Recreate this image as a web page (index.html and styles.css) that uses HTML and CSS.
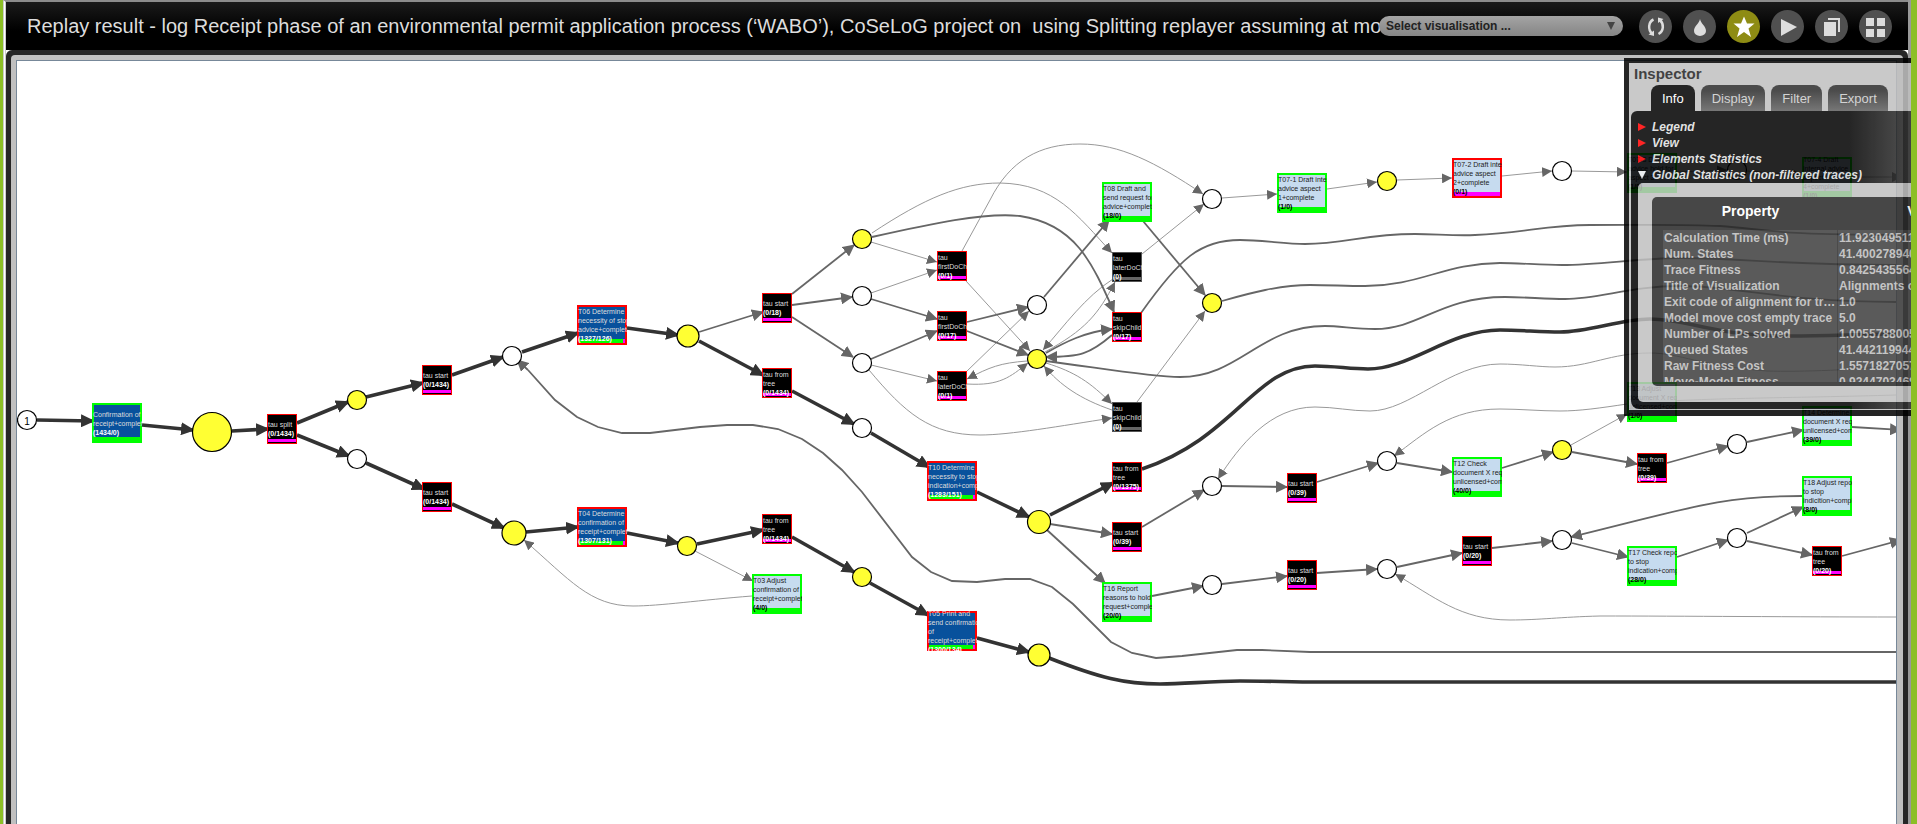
FILE: index.html
```html
<!DOCTYPE html>
<html lang="en">
<head>
<meta charset="utf-8">
<title>Replay result</title>
<link rel="stylesheet" href="styles.css">
</head>
<body>
<div class="desktop">
<main class="window">
<header class="bar">
<h1 class="title">Replay result - log Receipt phase of an environmental permit application process (‘WABO’), CoSeLoG project on  using Splitting replayer assuming at most</h1>
<div class="picker">
<select class="picker-select" aria-label="Select visualisation"><option>Select visualisation ...</option></select>
<svg class="picker-arrow" width="8" height="8" viewBox="0 0 8 8" aria-hidden="true"><path d="M0 0H8L4 8Z"/></svg>
</div>
<nav class="tools">
<button class="tool" aria-label="Refresh"><svg viewBox="0 0 33 33"><path d="M14.500 9.500C9 12 9 20 13 23.500M19.500 24C25 21 25 14 21 10" fill="none" stroke="#ddd" stroke-width="2.500"/><path d="M9.500 24.500L15 20.500V26ZM24.500 9L19 7.500V13Z"/></svg></button>
<button class="tool" aria-label="Drop"><svg viewBox="0 0 33 33"><path d="M17 9C18 14 23 16 23 21A6 5 0 0 1 11 21C11 16 16 14 17 9Z"/></svg></button>
<button class="tool tool-active" aria-label="Favourite"><svg viewBox="0 0 33 33"><path d="M17 6.500L20 13.500H27.500L21.500 18.500L24 27L17 22L10 27L12.500 18.500L6.500 13.500H14Z"/></svg></button>
<button class="tool" aria-label="Run"><svg viewBox="0 0 33 33"><path d="M10 9L26 17L10 26Z"/></svg></button>
<button class="tool" aria-label="Copy"><svg viewBox="0 0 33 33"><path d="M13 8H25V22H23V10H13Z"/><path d="M9 12H21V26H9Z"/></svg></button>
<button class="tool" aria-label="Grid"><svg viewBox="0 0 33 33"><path d="M7 8H15V16H7ZM18 8H26V16H18ZM7 19H15V27H7ZM18 19H26V27H18Z"/></svg></button>
</nav>
</header>
<section class="frame"><div class="frame-inner"><div class="canvas">
<svg class="graph" role="img" aria-label="Petri net with replay result">
<defs>
<marker id="a3" markerUnits="userSpaceOnUse" markerWidth="14" markerHeight="13" refX="12" refY="6.500" orient="auto"><path d="M0 0L14 6.500L0 13Z" fill="#333"/></marker>
<marker id="a2" markerUnits="userSpaceOnUse" markerWidth="12" markerHeight="12" refX="11" refY="6" orient="auto"><path d="M0 0L12 6L0 12Z" fill="#666"/></marker>
<marker id="a1" markerUnits="userSpaceOnUse" markerWidth="10" markerHeight="10" refX="10" refY="5" orient="auto"><path d="M0 0L10 5L0 10Z" fill="#666"/></marker>
<g id="hit"><rect width="50" height="40" fill="#0f0"/><rect x="2" y="2" width="46" height="32" fill="#08519c"/></g>
<g id="hit-light"><rect width="50" height="40" fill="#0f0"/><rect x="2" y="2" width="46" height="32" fill="#c6dbef"/></g>
<g id="mix"><rect width="50" height="40" fill="red"/><rect x="2" y="2" width="46" height="36" fill="#08519c"/><rect x="2" y="34" width="46" height="4" fill="#f0f"/><rect x="2" y="34" width="44" height="4" fill="#0f0"/></g>
<g id="miss"><rect width="50" height="40" fill="red"/><rect x="2" y="2" width="46" height="32" fill="#c6dbef"/><rect x="2" y="34" width="46" height="4" fill="#f0f"/></g>
<g id="tau"><rect width="30" height="30" fill="red"/><rect x="1" y="1" width="28" height="28"/><rect x="1" y="25" width="28" height="3" fill="#f0f"/></g>
<g id="tau-idle"><rect width="30" height="30" fill="#555"/><rect x="1" y="1" width="28" height="28"/><rect x="1" y="25" width="28" height="3" fill="#666"/></g>
</defs>
<g transform="translate(-17 -61)">
<g class="thin">
<path d="M695 551L753 581"/><path d="M752 596C700 600 660 606 633 606C590 606 570 580 524 540"/>
<path d="M871 242L937 262"/><path d="M871 293L937 270"/>
<path d="M872 233C925 198 960 183 1000 183C1055 184 1077 215 1112 253"/>
<path d="M962 251L990 200C1010 160 1040 144 1080 144C1120 144 1155 162 1203 194"/>
<path d="M966 281L1030 351"/><path d="M871 365L937 381"/><path d="M966 372L1029 311"/>
<path d="M1027 361C1000 363 990 367 967 379"/><path d="M967 384C1000 386 1010 377 1028 363"/>
<path d="M869 370C905 413 930 435 980 435C1010 435 1060 426 1112 418"/>
<path d="M1045 352C1085 330 1098 315 1115 282"/><path d="M1113 279C1085 297 1065 325 1043 350"/>
<path d="M1046 363C1075 372 1090 382 1112 404"/><path d="M1112 410C1080 399 1060 385 1044 366"/>
<path d="M1142 254L1204 204"/><path d="M1137 402L1205 311"/>
<path d="M1222 198L1277 194"/><path d="M1327 189L1377 182"/><path d="M1397 180L1452 178"/><path d="M1502 176L1552 171"/><path d="M1572 171L1627 172"/><path d="M1677 172L1727 170"/><path d="M1747 171L1802 175"/><path d="M1852 177L1902 177"/>
<path d="M1896 365C1860 370 1800 372 1767 371C1700 366 1680 353 1650 353C1610 353 1590 367 1555 367C1540 367 1520 364 1500 364C1450 364 1410 411 1370 411C1350 411 1335 407 1315 407C1270 407 1240 445 1218 479"/>
<path d="M1896 395C1800 398 1680 398 1627 404C1600 408 1580 411 1560 411C1540 411 1520 409 1500 409C1450 409 1425 433 1394 456"/>
<path d="M1571 445L1627 414"/>
<path d="M1896 617C1800 617 1680 616 1600 616C1560 617 1540 620 1510 620C1460 620 1435 597 1395 574"/>
</g>
<g class="mid">
<path d="M699 332L763 312"/><path d="M792 294L854 245"/><path d="M792 305L852 297"/><path d="M792 317L853 357"/>
<path d="M871 299L937 319"/><path d="M871 359L937 331"/><path d="M967 322L1028 307"/><path d="M967 331L1028 355"/>
<path d="M1044 297L1109 220"/><path d="M1143 221L1205 295"/>
<path d="M872 237C930 224 985 212 1020 216C1075 224 1092 262 1114 312"/>
<path d="M1046 353C1065 342 1085 332 1112 329"/><path d="M1112 335C1090 354 1080 357 1046 357"/>
<path d="M528 370L517 360"/>
<path d="M1050 524L1112 534"/><path d="M1047 530L1105 583"/><path d="M1142 527L1204 490"/><path d="M1222 486L1287 487"/><path d="M1317 482L1378 463"/><path d="M1397 463L1452 472"/><path d="M1502 468L1553 452"/><path d="M1572 452L1637 464"/><path d="M1667 463L1728 446"/><path d="M1747 442L1803 430"/><path d="M1852 427L1901 430"/>
<path d="M1152 596L1203 586"/><path d="M1222 584L1287 576"/><path d="M1317 573L1377 569"/><path d="M1397 567L1462 553"/><path d="M1492 548L1552 541"/><path d="M1572 543L1628 557"/><path d="M1677 557L1728 540"/><path d="M1747 533L1803 507"/><path d="M1747 541L1812 555"/><path d="M1842 556L1901 540"/>
<path d="M1802 496C1720 496 1690 508 1571 537"/>
</g>
<g class="mid plain">
<path d="M528 370L555 400L577 417L598 427L622 433L650 433L700 427L727 425L753 425L778 429L802 439L823 453L842 470L862 492L912 557L931 572L952 581L977 582L1005 579L1030 579L1052 587L1073 604L1111 642L1132 653L1156 658L1182 656L1237 650L1262 650L1310 652H1896"/>
<path d="M1141 313C1180 258 1200 240 1240 240C1262 240 1285 244 1305 244C1345 244 1365 234 1415 234C1435 234 1455 236 1475 235C1525 233 1545 225 1590 225C1640 225 1680 224 1720 226C1770 230 1780 235 1896 235"/>
<path d="M1222 301C1250 293 1280 285 1310 285C1330 285 1345 286 1365 286C1420 286 1445 263 1500 263C1520 263 1540 265 1562 265C1600 265 1640 258 1680 258C1740 258 1780 265 1896 265"/>
<path d="M1046 361C1100 368 1150 377 1180 377C1240 377 1260 326 1325 326C1340 326 1355 329 1375 329C1420 329 1440 297 1505 297C1525 297 1545 299 1565 299C1600 299 1630 286 1680 286C1740 286 1780 302 1896 302"/>
</g>
<g class="thick">
<path d="M37 420L93 421"/><path d="M142 425L193 430"/><path d="M232 431L268 429"/><path d="M297 423L348 402"/><path d="M297 435L349 456"/><path d="M366 397L423 383"/><path d="M366 463L424 489"/><path d="M452 375L503 357"/><path d="M452 504L504 528"/><path d="M522 352L578 333"/><path d="M627 328L678 335"/><path d="M699 341L763 375"/><path d="M792 391L854 424"/><path d="M871 433L929 467"/><path d="M526 532L578 527"/><path d="M627 533L678 543"/><path d="M697 544L763 530"/><path d="M792 537L854 572"/><path d="M870 583L928 615"/><path d="M977 638L1029 652"/><path d="M977 492L1029 517"/><path d="M1050 515L1113 483"/>
</g>
<g class="thick plain">
<path d="M1142 469C1235 438 1255 366 1315 366C1335 366 1350 369 1368 369C1410 369 1450 330 1500 330C1520 330 1540 332 1560 332C1590 332 1620 319 1650 319C1690 319 1710 336 1790 336C1830 336 1860 334 1896 334"/>
<path d="M1049 658C1100 678 1125 684 1160 684C1185 684 1210 681 1240 681C1270 681 1290 682 1320 682H1896"/>
</g>
<g class="place">
<circle cx="27" cy="420" r="9.500"/><circle cx="357" cy="459" r="9.500"/><circle cx="512" cy="356" r="9.500"/><circle cx="862" cy="296" r="9.500"/><circle cx="862" cy="363" r="9.500"/><circle cx="862" cy="428" r="9.500"/><circle cx="1037" cy="305" r="9.500"/><circle cx="1212" cy="199" r="9.500"/><circle cx="1212" cy="486" r="9.500"/><circle cx="1212" cy="585" r="9.500"/><circle cx="1387" cy="461" r="9.500"/><circle cx="1387" cy="569" r="9.500"/><circle cx="1562" cy="171" r="9.500"/><circle cx="1562" cy="540" r="9.500"/><circle cx="1737" cy="170" r="9.500"/><circle cx="1737" cy="444" r="9.500"/><circle cx="1737" cy="538" r="9.500"/>
</g>
<g class="place marked">
<circle cx="212" cy="432" r="19.500"/><circle cx="357" cy="400" r="9.500"/><circle cx="688" cy="336" r="11"/><circle cx="514" cy="533" r="12"/><circle cx="687" cy="546" r="9.500"/><circle cx="862" cy="239" r="9.500"/><circle cx="862" cy="577" r="9.500"/><circle cx="1037" cy="359" r="9.500"/><circle cx="1039" cy="522" r="11.500"/><circle cx="1039" cy="655" r="11"/><circle cx="1212" cy="303" r="9.500"/><circle cx="1387" cy="181" r="9.500"/><circle cx="1562" cy="450" r="9.500"/>
</g>
<text class="token" x="27" y="425">1</text>

<g class="dark">
<svg x="92" y="403" width="50" height="40"><use href="#hit"/><text x="1" y="14">Confirmation of<tspan x="1" dy="9">receipt+complete</tspan><tspan class="n" x="1" dy="9">(1434/0)</tspan></text></svg>
<svg x="577" y="305" width="50" height="40"><use href="#mix"/><text x="1" y="9">T06 Determine<tspan x="1" dy="9">necessity of stop</tspan><tspan x="1" dy="9">advice+complete</tspan><tspan class="n" x="1" dy="9">(1327/126)</tspan></text></svg>
<svg x="577" y="507" width="50" height="40"><use href="#mix"/><text x="1" y="9">T04 Determine<tspan x="1" dy="9">confirmation of</tspan><tspan x="1" dy="9">receipt+complete</tspan><tspan class="n" x="1" dy="9">(1307/131)</tspan></text></svg>
<svg x="927" y="461" width="50" height="40"><use href="#mix"/><text x="1" y="9">T10 Determine<tspan x="1" dy="9">necessity to stop</tspan><tspan x="1" dy="9">indication+complete</tspan><tspan class="n" x="1" dy="9">(1283/151)</tspan></text></svg>
<svg x="927" y="611" width="50" height="40"><use href="#mix"/><text x="1" y="5">T05 Print and<tspan x="1" dy="9">send confirmation</tspan><tspan x="1" dy="9">of</tspan><tspan x="1" dy="9">receipt+complete</tspan><tspan class="n" x="1" dy="9">(1300/134)</tspan></text></svg>
<svg x="267" y="414" width="30" height="30"><use href="#tau"/><text x="1" y="13">tau split<tspan class="n" x="1" dy="9">(0/1434)</tspan></text></svg>
<svg x="422" y="365" width="30" height="30"><use href="#tau"/><text x="1" y="13">tau start<tspan class="n" x="1" dy="9">(0/1434)</tspan></text></svg>
<svg x="422" y="482" width="30" height="30"><use href="#tau"/><text x="1" y="13">tau start<tspan class="n" x="1" dy="9">(0/1434)</tspan></text></svg>
<svg x="762" y="293" width="30" height="30"><use href="#tau"/><text x="1" y="13">tau start<tspan class="n" x="1" dy="9">(0/18)</tspan></text></svg>
<svg x="762" y="368" width="30" height="30"><use href="#tau"/><text x="1" y="9">tau from<tspan x="1" dy="9">tree</tspan><tspan class="n" x="1" dy="9">(0/1434)</tspan></text></svg>
<svg x="762" y="514" width="30" height="30"><use href="#tau"/><text x="1" y="9">tau from<tspan x="1" dy="9">tree</tspan><tspan class="n" x="1" dy="9">(0/1434)</tspan></text></svg>
<svg x="937" y="251" width="30" height="30"><use href="#tau"/><text x="1" y="9">tau<tspan x="1" dy="9">firstDoChild</tspan><tspan class="n" x="1" dy="9">(0/1)</tspan></text></svg>
<svg x="937" y="311" width="30" height="30"><use href="#tau"/><text x="1" y="9">tau<tspan x="1" dy="9">firstDoChild</tspan><tspan class="n" x="1" dy="9">(0/17)</tspan></text></svg>
<svg x="937" y="371" width="30" height="30"><use href="#tau"/><text x="1" y="9">tau<tspan x="1" dy="9">laterDoChild</tspan><tspan class="n" x="1" dy="9">(0/1)</tspan></text></svg>
<svg x="1112" y="252" width="30" height="30"><use href="#tau-idle"/><text x="1" y="9">tau<tspan x="1" dy="9">laterDoChild</tspan><tspan class="n" x="1" dy="9">(0)</tspan></text></svg>
<svg x="1112" y="312" width="30" height="30"><use href="#tau"/><text x="1" y="9">tau<tspan x="1" dy="9">skipChild</tspan><tspan class="n" x="1" dy="9">(0/17)</tspan></text></svg>
<svg x="1112" y="402" width="30" height="30"><use href="#tau-idle"/><text x="1" y="9">tau<tspan x="1" dy="9">skipChild</tspan><tspan class="n" x="1" dy="9">(0)</tspan></text></svg>
<svg x="1112" y="462" width="30" height="30"><use href="#tau"/><text x="1" y="9">tau from<tspan x="1" dy="9">tree</tspan><tspan class="n" x="1" dy="9">(0/1375)</tspan></text></svg>
<svg x="1112" y="522" width="30" height="30"><use href="#tau"/><text x="1" y="13">tau start<tspan class="n" x="1" dy="9">(0/39)</tspan></text></svg>
<svg x="1287" y="473" width="30" height="30"><use href="#tau"/><text x="1" y="13">tau start<tspan class="n" x="1" dy="9">(0/39)</tspan></text></svg>
<svg x="1287" y="560" width="30" height="30"><use href="#tau"/><text x="1" y="13">tau start<tspan class="n" x="1" dy="9">(0/20)</tspan></text></svg>
<svg x="1462" y="536" width="30" height="30"><use href="#tau"/><text x="1" y="13">tau start<tspan class="n" x="1" dy="9">(0/20)</tspan></text></svg>
<svg x="1637" y="453" width="30" height="30"><use href="#tau"/><text x="1" y="9">tau from<tspan x="1" dy="9">tree</tspan><tspan class="n" x="1" dy="9">(0/39)</tspan></text></svg>
<svg x="1812" y="546" width="30" height="30"><use href="#tau"/><text x="1" y="9">tau from<tspan x="1" dy="9">tree</tspan><tspan class="n" x="1" dy="9">(0/20)</tspan></text></svg>
</g>
<g class="light">
<svg x="752" y="574" width="50" height="40"><use href="#hit-light"/><text x="1" y="9">T03 Adjust<tspan x="1" dy="9">confirmation of</tspan><tspan x="1" dy="9">receipt+complete</tspan><tspan class="n" x="1" dy="9">(4/0)</tspan></text></svg>
<svg x="1102" y="182" width="50" height="40"><use href="#hit-light"/><text x="1" y="9">T08 Draft and<tspan x="1" dy="9">send request for</tspan><tspan x="1" dy="9">advice+complete</tspan><tspan class="n" x="1" dy="9">(18/0)</tspan></text></svg>
<svg x="1277" y="173" width="50" height="40"><use href="#hit-light"/><text x="1" y="9">T07-1 Draft internal<tspan x="1" dy="9">advice aspect</tspan><tspan x="1" dy="9">1+complete</tspan><tspan class="n" x="1" dy="9">(1/0)</tspan></text></svg>
<svg x="1452" y="158" width="50" height="40"><use href="#miss"/><text x="1" y="9">T07-2 Draft internal<tspan x="1" dy="9">advice aspect</tspan><tspan x="1" dy="9">2+complete</tspan><tspan class="n" x="1" dy="9">(0/1)</tspan></text></svg>
<svg x="1627" y="153" width="50" height="40"><use href="#hit-light"/><text x="1" y="9">T07-3 Draft<tspan x="1" dy="9">advice hold for</tspan><tspan x="1" dy="9">aspect 3</tspan><tspan class="n" x="1" dy="9">(1/0)</tspan></text></svg>
<svg x="1802" y="157" width="50" height="40"><use href="#hit-light"/><text x="1" y="5">T07-4 Draft<tspan x="1" dy="9">internal advice</tspan><tspan x="1" dy="9">aspect</tspan><tspan x="1" dy="9">4+complete</tspan><tspan class="n" x="1" dy="9">(1/0)</tspan></text></svg>
<svg x="1627" y="382" width="50" height="40"><use href="#hit-light"/><text x="1" y="9">T13 Adjust<tspan x="1" dy="9">document X req</tspan><tspan x="1" dy="9">unlicensed+complete</tspan><tspan class="n" x="1" dy="9">(1/0)</tspan></text></svg>
<svg x="1802" y="406" width="50" height="40"><use href="#hit-light"/><text x="1" y="9">T14 Determine<tspan x="1" dy="9">document X req</tspan><tspan x="1" dy="9">unlicensed+complete</tspan><tspan class="n" x="1" dy="9">(39/0)</tspan></text></svg>
<svg x="1452" y="457" width="50" height="40"><use href="#hit-light"/><text x="1" y="9">T12 Check<tspan x="1" dy="9">document X req</tspan><tspan x="1" dy="9">unlicensed+complete</tspan><tspan class="n" x="1" dy="9">(40/0)</tspan></text></svg>
<svg x="1802" y="476" width="50" height="40"><use href="#hit-light"/><text x="1" y="9">T18 Adjust report<tspan x="1" dy="9">to stop</tspan><tspan x="1" dy="9">indicition+complete</tspan><tspan class="n" x="1" dy="9">(8/0)</tspan></text></svg>
<svg x="1627" y="546" width="50" height="40"><use href="#hit-light"/><text x="1" y="9">T17 Check report<tspan x="1" dy="9">to stop</tspan><tspan x="1" dy="9">indication+complete</tspan><tspan class="n" x="1" dy="9">(28/0)</tspan></text></svg>
<svg x="1102" y="582" width="50" height="40"><use href="#hit-light"/><text x="1" y="9">T16 Report<tspan x="1" dy="9">reasons to hold</tspan><tspan x="1" dy="9">request+complete</tspan><tspan class="n" x="1" dy="9">(20/0)</tspan></text></svg>
</g>
</g>
</svg>
</div></div></section>
</main>
<aside class="inspector">
<h2 class="inspector-title">Inspector</h2>
<div class="tabs" role="tablist">
<button class="tab tab-active" role="tab">Info</button><button class="tab" role="tab">Display</button><button class="tab" role="tab">Filter</button><button class="tab" role="tab">Export</button>
</div>
<div class="body">
<button class="fold"><svg width="8" height="8" viewBox="0 0 8 8"><path d="M0 0L8 4L0 8Z" fill="#f00"/></svg>Legend</button>
<button class="fold"><svg width="8" height="8" viewBox="0 0 8 8"><path d="M0 0L8 4L0 8Z" fill="#f00"/></svg>View</button>
<button class="fold"><svg width="8" height="8" viewBox="0 0 8 8"><path d="M0 0L8 4L0 8Z" fill="#f00"/></svg>Elements Statistics</button>
<button class="fold"><svg width="8" height="8" viewBox="0 0 8 8"><path d="M0 0H8L4 8Z" fill="#eee"/></svg>Global Statistics (non-filtered traces)</button>
<div class="sheet"><div class="stats">
<table class="table">
<thead><tr><th>Property</th><th>Value</th></tr></thead>
<tbody>
<tr><td>Calculation Time (ms)</td><td>11.9230495118</td></tr>
<tr><td>Num. States</td><td>41.4002789400</td></tr>
<tr><td>Trace Fitness</td><td>0.8425435564</td></tr>
<tr><td>Title of Visualization</td><td>Alignments of log</td></tr>
<tr><td>Exit code of alignment for traces</td><td>1.0</td></tr>
<tr><td>Model move cost empty trace</td><td>5.0</td></tr>
<tr><td>Number of LPs solved</td><td>1.0055788005</td></tr>
<tr><td>Queued States</td><td>41.4421199442</td></tr>
<tr><td>Raw Fitness Cost</td><td>1.5571827057</td></tr>
<tr><td>Move-Model Fitness</td><td>0.9244703468</td></tr>
</tbody>
</table>
</div></div>
</div>
</aside>
</div>
</body>
</html>
```
FILE: styles.css
```css
* { box-sizing: border-box; }
body { margin: 0; font-family: "Liberation Sans", Arial, sans-serif; }
button { font-family: inherit; border: 0; margin: 0; }
.desktop {
  position: relative;
  display: flex;
  height: 100vh;
  overflow: hidden;
  border-left: 3px solid #8cbf26;
  border-right: 6px solid #8cbf26;
  background: #999;
}
.window {
  flex: 1;
  min-width: 0;
  display: flex;
  flex-direction: column;
  margin-right: 3px;
  border-left: 3px double #ccc;
  border-top: 2px solid #8c8c8c;
  background: #fff;
}
.bar {
  display: flex;
  align-items: center;
  height: 48px;
  padding: 0 16px 0 21px;
  background: linear-gradient(#1a1a1a, #000 60%);
}
.title {
  flex: 1;
  min-width: 0;
  margin: 0;
  white-space: pre;
  font-size: 20px;
  font-weight: 400;
  line-height: 28px;
  color: #ddd;
}
.picker { position: relative; flex: none; width: 244px; }
.picker-select {
  display: block;
  width: 100%;
  height: 20px;
  padding: 0 7px;
  border: 0;
  border-radius: 10px;
  appearance: none;
  background: linear-gradient(#a4a4a4, #858585);
  font: bold 12px "Liberation Sans", Arial, sans-serif;
  color: #222;
}
.picker-arrow { position: absolute; right: 8px; top: 6px; fill: #444; }
.tools { flex: none; display: flex; gap: 11px; margin-left: 16px; }
.tool {
  width: 33px;
  height: 33px;
  padding: 0;
  border-radius: 50%;
  background: #505050;
}
.tool svg { display: block; fill: #ddd; }
.tool-active { background: #8e8c14; }
.tool-active svg { fill: #fff; }
.frame {
  flex: 1;
  min-height: 0;
  padding: 5px 5px 0;
  border-radius: 6px 6px 0 0;
  background: #262626;
}
.frame-inner {
  height: 100%;
  padding: 5px 6px 0 5px;
  border-radius: 4px 4px 0 0;
  background: #c0c0c0;
}
.canvas {
  height: 100%;
  border: 1px solid #778899;
  border-bottom: 0;
  background: #fff;
}
.graph { display: block; width: 100%; height: 100%; }
.thin, .mid, .thick { fill: none; }
.thin { stroke: #999; stroke-width: 1; }
.mid { stroke: #666; stroke-width: 1.8; }
.thick { stroke: #333; stroke-width: 3.6; }
.thin path { marker-end: url(#a1); }
.mid path { marker-end: url(#a2); }
.thick path { marker-end: url(#a3); }
.plain path { marker-end: none; }
.place { fill: #fff; stroke: #000; stroke-width: 1.2; }
.marked { fill: #ff3; }
.token { font-size: 10px; text-anchor: middle; }
.dark text, .light text { font-size: 7px; }
.dark text { fill: #ddd; }
.light text { fill: #222; }
.n { font-weight: bold; }
.dark .n { fill: #fff; }
.light .n { fill: #000; }

.inspector {
  position: absolute;
  top: 58px;
  right: 0;
  width: 287px;
  padding: 5px 0 6px 5px;
  background: linear-gradient(#c0c0c0, #c0c0c0) content-box, #000;
  opacity: 0.85;
  overflow: hidden;
}
.inspector-title {
  margin: 0;
  padding: 1px 0 2px 5px;
  font-size: 15px;
  line-height: 19px;
  color: #222;
}
.tabs { display: flex; gap: 6px; padding-left: 22px; }
.tab {
  height: 26px;
  padding: 0 11px;
  border-radius: 8px 8px 0 0;
  background: linear-gradient(#2c2c2c 20%, #606060);
  font-size: 13px;
  color: #ccc;
}
.tab-active { background: #000; color: #fff; }
.body {
  margin: 0 0 1px 2px;
  padding: 8px 0 7px 7px;
  border-radius: 6px 0 0 8px;
  background: linear-gradient(90deg, #000 78%, #333);
}
.fold {
  display: flex;
  align-items: center;
  gap: 6px;
  width: 100%;
  height: 16px;
  padding: 0;
  background: none;
  font: italic bold 12px/16px "Liberation Sans", Arial, sans-serif;
  white-space: nowrap;
  color: #ddd;
}
.sheet {
  padding: 14px 0 16px 14px;
  border-radius: 5px 0 0 5px;
  background: #c0c0c0;
}
.stats {
  height: 189px;
  padding: 0 0 4px 11px;
  border-radius: 5px 0 0 5px;
  background: #282828;
  overflow: hidden;
}
.table {
  display: block;
  width: 400px;
  height: 185px;
  overflow: hidden;
  border-collapse: collapse;
  font-size: 12px;
  font-weight: bold;
  color: #bbb;
}
.table tr { display: flex; }
.table th { flex: 0 0 175px; height: 33px; padding: 0; font-size: 14px; line-height: 28px; color: #fff; }
.table td {
  flex: 0 0 175px;
  height: 16px;
  padding: 0 0 0 1px;
  line-height: 16px;
  background: #3e3e3e;
  border-right: 1px solid #2c2c2c;
  overflow: hidden;
  white-space: nowrap;
  text-overflow: ellipsis;
}
```
